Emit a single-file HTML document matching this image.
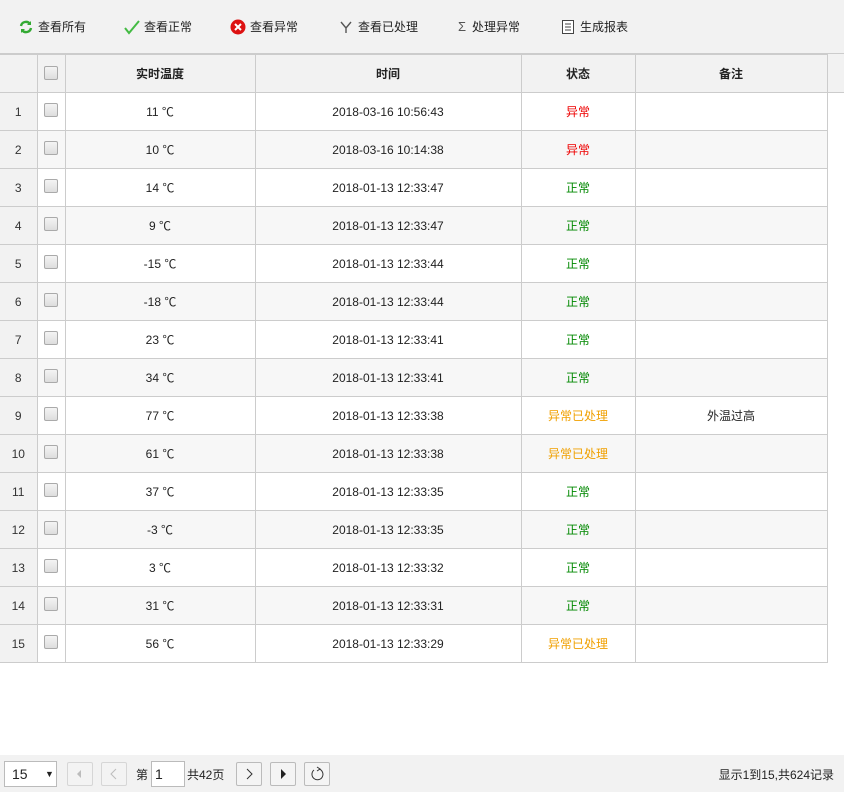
<!DOCTYPE html>
<html><head><meta charset="utf-8"><style>
*{box-sizing:border-box;margin:0;padding:0}
body{width:844px;height:792px;background:#fff;font-family:"Liberation Sans","Noto Sans CJK SC",sans-serif;font-size:12px;color:#222;position:relative;overflow:hidden}
.tb{position:absolute;left:0;top:0;width:844px;height:54px;background:#f2f2f2;border-bottom:1px solid #ccc}
.btn{position:absolute;top:18px;height:18px;line-height:18px;font-size:12px;color:#222;display:flex;align-items:center}
.btn svg{margin-right:4px}
table{position:absolute;left:0;top:54px;border-collapse:collapse;table-layout:fixed}
td,th{height:38px;border:1px solid #ccc;text-align:center;font-size:12px;font-weight:normal}
th{background:#f2f2f2;font-weight:bold;color:#222}
td.n{background:#f2f2f2;color:#333;border-left:none}
tr.alt td{background:#f7f7f7}
tr.alt td.n{background:#f2f2f2}
.cb{display:inline-block;width:14px;height:14px;border:1px solid #aaa;border-radius:2px;background:linear-gradient(#f4f4f4,#ddd);vertical-align:middle;position:relative;top:-2px}
.r{color:#e00}.g{color:#080}.o{color:#f0a000}
.hx{position:absolute;left:827px;top:54px;width:17px;height:39px;background:#f2f2f2;border-bottom:1px solid #ccc}
.pg{position:absolute;left:0;top:755px;width:844px;height:37px;background:#f2f2f2}
.pb{position:absolute;top:7px;height:24px;border:1px solid #bbb;background:#f4f4f4;border-radius:2px;display:flex;align-items:center;justify-content:center}
</style></head><body>
<div class="tb">
<div class="btn" style="left:18px"><svg width="16" height="16" viewBox="0 0 16 16"><path d="M3 7a5 5 0 0 1 9-2" stroke="#3a3" stroke-width="2.4" fill="none"/><path d="M13 2v4h-4z" fill="#3a3"/><path d="M13 9a5 5 0 0 1-9 2" stroke="#3a3" stroke-width="2.4" fill="none"/><path d="M3 14v-4h4z" fill="#3a3"/></svg>查看所有</div>
<div class="btn" style="left:124px"><svg width="16" height="16" viewBox="0 0 16 16"><path d="M1 9l4 5L15 2" stroke="#4b4" stroke-width="2" fill="none"/></svg>查看正常</div>
<div class="btn" style="left:230px"><svg width="16" height="16" viewBox="0 0 16 16"><circle cx="8" cy="8" r="7.5" fill="#d11"/><path d="M5 5l6 6M11 5l-6 6" stroke="#fff" stroke-width="2"/></svg>查看异常</div>
<div class="btn" style="left:338px"><svg width="16" height="16" viewBox="0 0 16 16"><path d="M3 3l5 6 5-6M8 9v5" stroke="#555" stroke-width="1.4" fill="none"/></svg>查看已处理</div>
<div class="btn" style="left:456px"><span style="font-size:13px;color:#555;margin-right:6px;margin-left:2px">Σ</span>处理异常</div>
<div class="btn" style="left:560px"><svg width="16" height="16" viewBox="0 0 16 16"><rect x="2.5" y="1.5" width="11" height="13" fill="#fff" stroke="#444"/><path d="M5 5h6M5 8h6M5 11h6" stroke="#444"/></svg>生成报表</div>
</div>
<div class="hx"></div>
<table>
<colgroup><col style="width:37px"><col style="width:28px"><col style="width:190px"><col style="width:266px"><col style="width:114px"><col style="width:192px"></colgroup>
<tr><th style="border-left:none"></th><th><span class="cb" style="top:-1px"></span></th><th>实时温度</th><th>时间</th><th>状态</th><th>备注</th></tr>
<tr><td class="n">1</td><td><span class="cb"></span></td><td>11 ℃</td><td>2018-03-16 10:56:43</td><td class="r">异常</td><td></td></tr>
<tr class="alt"><td class="n">2</td><td><span class="cb"></span></td><td>10 ℃</td><td>2018-03-16 10:14:38</td><td class="r">异常</td><td></td></tr>
<tr><td class="n">3</td><td><span class="cb"></span></td><td>14 ℃</td><td>2018-01-13 12:33:47</td><td class="g">正常</td><td></td></tr>
<tr class="alt"><td class="n">4</td><td><span class="cb"></span></td><td>9 ℃</td><td>2018-01-13 12:33:47</td><td class="g">正常</td><td></td></tr>
<tr><td class="n">5</td><td><span class="cb"></span></td><td>-15 ℃</td><td>2018-01-13 12:33:44</td><td class="g">正常</td><td></td></tr>
<tr class="alt"><td class="n">6</td><td><span class="cb"></span></td><td>-18 ℃</td><td>2018-01-13 12:33:44</td><td class="g">正常</td><td></td></tr>
<tr><td class="n">7</td><td><span class="cb"></span></td><td>23 ℃</td><td>2018-01-13 12:33:41</td><td class="g">正常</td><td></td></tr>
<tr class="alt"><td class="n">8</td><td><span class="cb"></span></td><td>34 ℃</td><td>2018-01-13 12:33:41</td><td class="g">正常</td><td></td></tr>
<tr><td class="n">9</td><td><span class="cb"></span></td><td>77 ℃</td><td>2018-01-13 12:33:38</td><td class="o">异常已处理</td><td>外温过高</td></tr>
<tr class="alt"><td class="n">10</td><td><span class="cb"></span></td><td>61 ℃</td><td>2018-01-13 12:33:38</td><td class="o">异常已处理</td><td></td></tr>
<tr><td class="n">11</td><td><span class="cb"></span></td><td>37 ℃</td><td>2018-01-13 12:33:35</td><td class="g">正常</td><td></td></tr>
<tr class="alt"><td class="n">12</td><td><span class="cb"></span></td><td>-3 ℃</td><td>2018-01-13 12:33:35</td><td class="g">正常</td><td></td></tr>
<tr><td class="n">13</td><td><span class="cb"></span></td><td>3 ℃</td><td>2018-01-13 12:33:32</td><td class="g">正常</td><td></td></tr>
<tr class="alt"><td class="n">14</td><td><span class="cb"></span></td><td>31 ℃</td><td>2018-01-13 12:33:31</td><td class="g">正常</td><td></td></tr>
<tr><td class="n">15</td><td><span class="cb"></span></td><td>56 ℃</td><td>2018-01-13 12:33:29</td><td class="o">异常已处理</td><td></td></tr>
</table>
<div class="pg">
<div style="position:absolute;left:4px;top:6px;width:53px;height:26px;background:#fff;border:1px solid #bbb;font-size:14px;line-height:24px;padding-left:7px">15<span style="position:absolute;left:40px;font-size:9px">▼</span></div>
<div class="pb" style="left:67px;width:26px;opacity:.5"><svg width="10" height="12"><path d="M6 2v8L2 6z" fill="#888"/></svg></div>
<div class="pb" style="left:101px;width:26px;opacity:.5"><svg width="10" height="12"><path d="M7 1L2 6l5 5" stroke="#888" fill="none"/></svg></div>
<span style="position:absolute;left:136px;top:11px;font-size:12px">第</span>
<div style="position:absolute;left:151px;top:6px;width:34px;height:26px;background:#fff;border:1px solid #bbb;font-size:14px;line-height:24px;padding-left:3px">1</div>
<span style="position:absolute;left:187px;top:11px;font-size:12px">共42页</span>
<div class="pb" style="left:236px;width:26px"><svg width="10" height="12"><path d="M3 1l5 5-5 5" stroke="#333" fill="none"/></svg></div>
<div class="pb" style="left:270px;width:26px"><svg width="10" height="12"><path d="M3 1v10l5-5z" fill="#222"/></svg></div>
<div class="pb" style="left:304px;width:26px"><svg width="14" height="16" viewBox="0 0 14 16"><path d="M9 3a5.5 5.5 0 1 1-5 1" stroke="#333" fill="none"/><path d="M7 1l3 2-3 2" stroke="#333" fill="none"/></svg></div>
<span style="position:absolute;right:10px;top:11px;font-size:12px">显示1到15,共624记录</span>
</div>
</body></html>
